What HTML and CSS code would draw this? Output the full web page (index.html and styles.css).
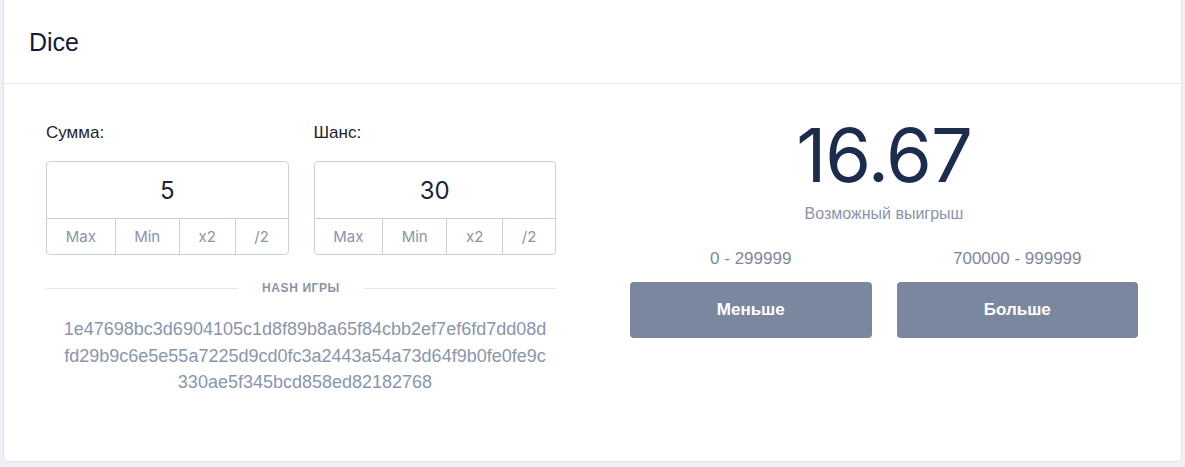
FILE: index.html
```html
<!DOCTYPE html>
<html lang="ru">
  <head>
    <meta charset="UTF-8" />
    <meta name="viewport" content="width=device-width, initial-scale=1" />
    <title>Dice</title>
    <link rel="stylesheet" href="styles.css">
  </head>
  <body>
    <div class="card">
      <div class="card-header">Dice</div>
      <div class="card-body">
        <div class="left-col">
          <div class="inputs">
            <div class="field">
              <label class="field-label">Сумма:</label>
              <div class="field-box">
                <div class="field-value">5</div>
                <div class="field-buttons">
                  <button>Max</button>
                  <button>Min</button>
                  <button>x2</button>
                  <button>/2</button>
                </div>
              </div>
            </div>
            <div class="field">
              <label class="field-label">Шанс:</label>
              <div class="field-box">
                <div class="field-value">30</div>
                <div class="field-buttons">
                  <button>Max</button>
                  <button>Min</button>
                  <button>x2</button>
                  <button>/2</button>
                </div>
              </div>
            </div>
          </div>
          <div class="hash-title"><span>HASH ИГРЫ</span></div>
          <div class="hash">1e47698bc3d6904105c1d8f89b8a65f84cbb2ef7ef6fd7dd08d<br>fd29b9c6e5e55a7225d9cd0fc3a2443a54a73d64f9b0fe0fe9c<br>330ae5f345bcd858ed82182768</div>
        </div>
        <div class="right-col">
          <div class="win">16.67</div>
          <div class="win-label">Возможный выигрыш</div>
          <div class="bets">
            <div class="bet">
              <div class="range">0 - 299999</div>
              <button class="bet-btn">Меньше</button>
            </div>
            <div class="bet">
              <div class="range">700000 - 999999</div>
              <button class="bet-btn">Больше</button>
            </div>
          </div>
        </div>
      </div>
    </div>
  </body>
</html>
```

FILE: styles.css
```css
body {
  margin: 0;
  padding: 0 3px;
  background-color: #eef0f6;
  font-family: "Liberation Sans", Arial, sans-serif;
  height: 467px;
  overflow: hidden;
}

.card {
  margin-top: -5px;
  height: 467px;
  background: #fff;
  border: 1px solid #dfe3ec;
  border-radius: 5px;
  box-sizing: border-box;
}

.card-header {
  height: 88px;
  box-sizing: border-box;
  padding: 5px 25px 0;
  display: flex;
  align-items: center;
  font-size: 25px;
  color: #131a3a;
  border-bottom: 1px solid #e3e6ee;
}

.card-body {
  display: grid;
  grid-template-columns: 510px 508px;
  column-gap: 74px;
  padding: 39px 0 0 42px;
}

.inputs {
  display: flex;
  gap: 25px;
}

.field {
  width: 243px;
}

.field-label {
  display: block;
  font-size: 17px;
  line-height: 20px;
  color: #1a1f2e;
  margin-bottom: 18px;
}

.field-box {
  border: 1px solid #c9cfdd;
  border-radius: 4px;
}

.field-value {
  height: 56px;
  display: flex;
  align-items: center;
  justify-content: center;
  font-family: Inter, "Noto Sans", sans-serif;
  font-size: 24px;
  color: #1b2438;
  border-bottom: 1px solid #c9cfdd;
}

.field-buttons {
  display: flex;
  height: 35px;
}

.field-buttons button {
  flex: 1 1 auto;
  border: none;
  border-left: 1px solid #c9cfdd;
  background: none;
  padding: 0;
  font-family: Inter, "Noto Sans", sans-serif;
  font-size: 15px;
  color: #8a94aa;
}

.field-buttons button:first-child {
  border-left: none;
}

.hash-title {
  display: flex;
  align-items: center;
  gap: 24px;
  margin-top: 26px;
  font-size: 12px;
  font-weight: bold;
  letter-spacing: 0.6px;
  color: #8a94a8;
}

.hash-title::before,
.hash-title::after {
  content: "";
  flex: 1;
  height: 1px;
  background: #e3e6ee;
}

.hash {
  margin-top: 21px;
  padding-left: 8px;
  text-align: center;
  font-size: 18px;
  line-height: 26.5px;
  color: #8996ad;
}

.right-col {
  text-align: center;
}

.win {
  margin-top: -5px;
  font-family: Inter, "Noto Sans", sans-serif;
  font-size: 74px;
  line-height: 74px;
  color: #1c2c4c;
  letter-spacing: -1px;
}

.win-label {
  margin-top: 13px;
  font-size: 16px;
  color: #8a94a8;
}

.bets {
  display: flex;
  gap: 25px;
  margin-top: 26px;
}

.bet {
  flex: 1;
}

.range {
  font-size: 17px;
  color: #7e889d;
  margin-bottom: 13px;
}

.bet-btn {
  width: 100%;
  height: 56px;
  border: none;
  border-radius: 4px;
  background: #7a879f;
  color: #fff;
  font-family: "Liberation Sans", Arial, sans-serif;
  font-size: 17px;
  font-weight: bold;
}
```
